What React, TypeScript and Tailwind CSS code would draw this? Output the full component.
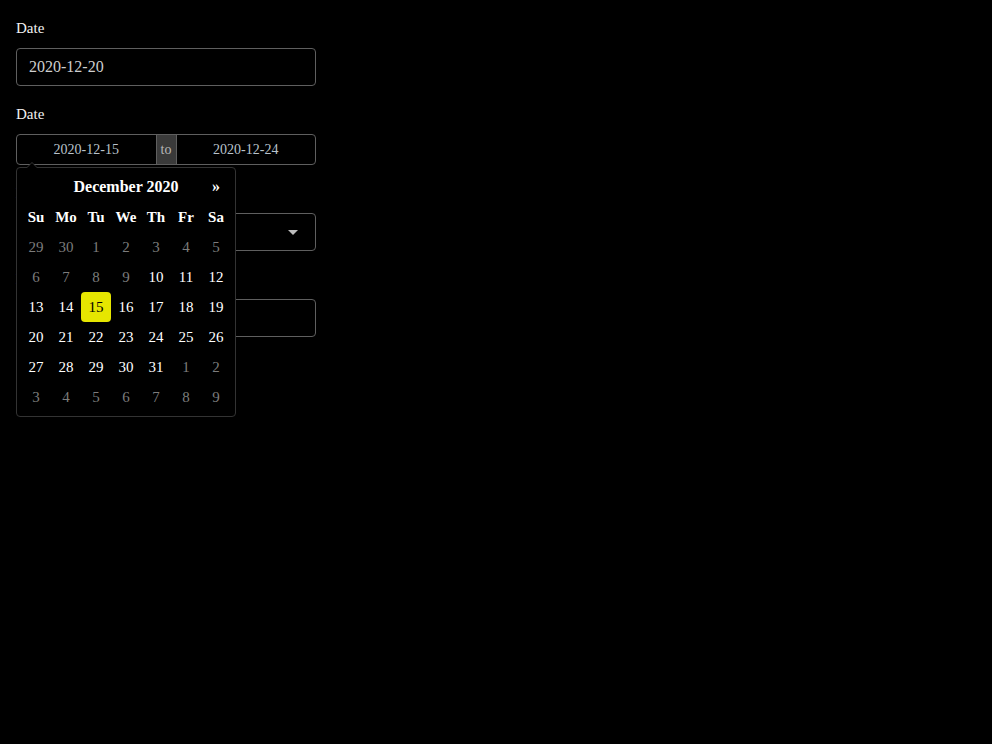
import React from 'react';

const days = ['Su', 'Mo', 'Tu', 'We', 'Th', 'Fr', 'Sa'];

const weeks: { d: number; muted?: boolean; active?: boolean }[][] = [
  [29, 30, 1, 2, 3, 4, 5].map((d) => ({ d, muted: true })),
  [6, 7, 8, 9].map((d) => ({ d, muted: true })).concat([10, 11, 12].map((d) => ({ d, muted: false }))),
  [13, 14, 15, 16, 17, 18, 19].map((d) => ({ d, active: d === 15 })),
  [20, 21, 22, 23, 24, 25, 26].map((d) => ({ d })),
  [27, 28, 29, 30, 31].map((d) => ({ d })).concat([1, 2].map((d) => ({ d, muted: true }))),
  [3, 4, 5, 6, 7, 8, 9].map((d) => ({ d, muted: true })),
];

const Field = ({ label, children }: { label: string; children: React.ReactNode }) => (
  <div className="mb-4">
    <label className="block text-[15px] leading-6 text-[#f2f2f2] mb-2">{label}</label>
    {children}
  </div>
);

const App = () => {
  return (
    <div
      className="min-h-[744px] bg-black p-4 text-white"
      style={{ fontFamily: '"Liberation Serif", "Times New Roman", serif' }}
    >
      <div className="w-[300px]">
        <Field label="Date">
          <div className="h-[38px] rounded border border-[#5f5f5f] px-3 flex items-center text-base text-[#cfcfcf]">
            2020-12-20
          </div>
        </Field>

        <div className="relative">
          <Field label="Date">
            <div className="flex h-[31px] rounded border border-[#5f5f5f] text-sm text-[#b9c3cc]">
              <div className="flex-1 flex items-center justify-center">2020-12-15</div>
              <div className="w-[21px] flex items-center justify-center bg-[#3a3a3a] border-x border-[#5f5f5f] text-[#b8b8b8]">
                to
              </div>
              <div className="flex-1 flex items-center justify-center">2020-12-24</div>
            </div>
          </Field>

          <Field label="Date">
            <div className="h-[38px] rounded border border-[#5f5f5f] px-3 flex items-center justify-end">
              <span className="w-0 h-0 border-x-[5px] border-x-transparent border-t-[5px] border-t-[#bdbdbd] mr-[5px]" />
            </div>
          </Field>

          <Field label="Date">
            <div className="h-[38px] rounded border border-[#5f5f5f]" />
          </Field>

          {/* datepicker popup */}
          <div className="absolute left-0 top-[65px] w-[220px] rounded border border-[#333] bg-black p-1">
            <span className="absolute -top-[6px] left-[9px] w-0 h-0 border-x-[6px] border-x-transparent border-b-[6px] border-b-[#333]" />
            <span className="absolute -top-[5px] left-[10px] w-0 h-0 border-x-[5px] border-x-transparent border-b-[5px] border-b-black" />
            <div className="grid grid-cols-7 text-[15px]">
              <div className="h-[30px]" />
              <div className="col-span-5 h-[30px] flex items-center justify-center font-bold text-base">December 2020</div>
              <div className="h-[30px] flex items-center justify-center font-bold text-base">»</div>
              {days.map((d) => (
                <div key={d} className="h-[30px] flex items-center justify-center font-bold">
                  {d}
                </div>
              ))}
              {weeks.flat().map((c, i) => (
                <div
                  key={i}
                  className={
                    c.active
                      ? 'h-[30px] flex items-center justify-center rounded bg-[#e6e600] text-black'
                      : c.muted
                      ? 'h-[30px] flex items-center justify-center text-[#7c7c7c]'
                      : 'h-[30px] flex items-center justify-center text-white'
                  }
                >
                  {c.d}
                </div>
              ))}
            </div>
          </div>
        </div>
      </div>
    </div>
  );
};

export default App;
